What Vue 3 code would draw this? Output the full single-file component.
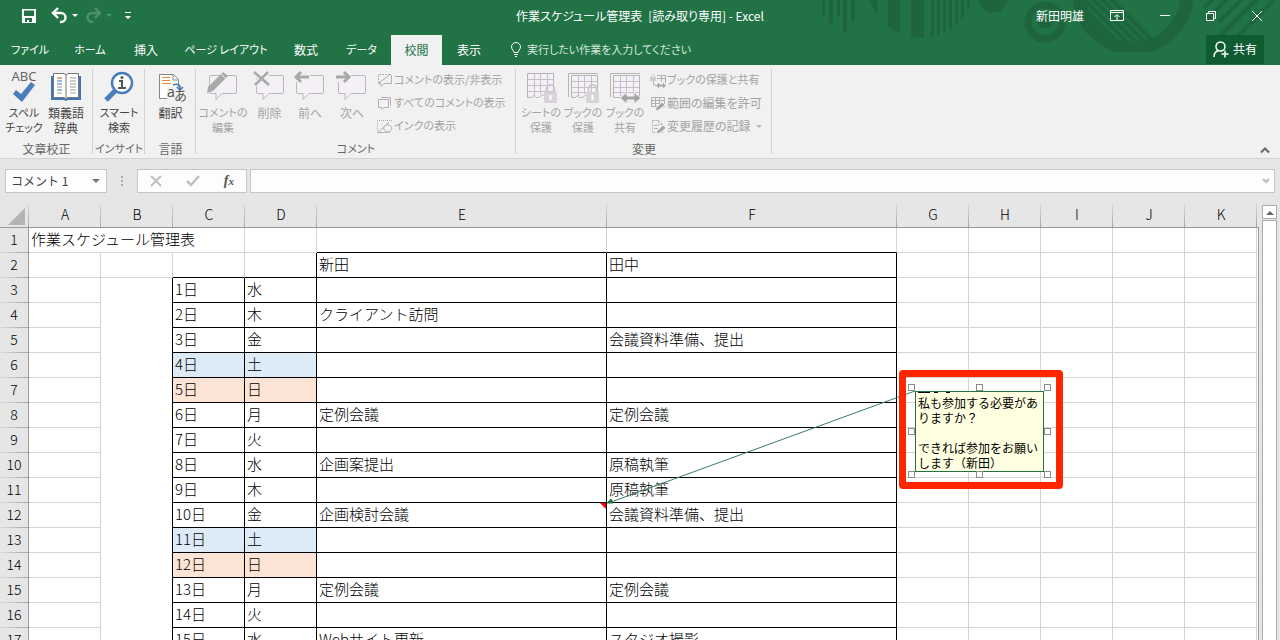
<script setup>
import { ref } from 'vue'

const tabs = ['ファイル', 'ホーム', '挿入', 'ページ レイアウト', '数式', 'データ', '校閲', '表示']
const activeTab = ref('校閲')
const nameBox = ref('コメント 1')
const formula = ref('')

const isKana = (text) => /^[ァ-ヶー ]+$/.test(text)

const columns = ['A', 'B', 'C', 'D', 'E', 'F', 'G', 'H', 'I', 'J', 'K']
const days = '水木金土日月火水木金土日月火水'.split('')
const tasks = {
  4: ['クライアント訪問', ''],
  5: ['', '会議資料準備、提出'],
  8: ['定例会議', '定例会議'],
  10: ['企画案提出', '原稿執筆'],
  11: ['', '原稿執筆'],
  12: ['企画検討会議', '会議資料準備、提出'],
  15: ['定例会議', '定例会議'],
  17: ['Webサイト更新', 'スタジオ撮影']
}

const rows = Array.from({ length: 17 }, (_, i) => {
  const n = i + 1
  const values = {}
  if (n === 1) values.A = '作業スケジュール管理表'
  if (n === 2) {
    values.E = '新田'
    values.F = '田中'
  }
  if (n > 2) {
    values.C = `${n - 2}日`
    values.D = days[n - 3]
    const t = tasks[n] || ['', '']
    values.E = t[0]
    values.F = t[1]
  }
  return { n, values }
})

function cellClass(col, n) {
  const day = days[n - 3]
  const inDates = col === 'C' || col === 'D'
  const inTasks = col === 'E' || col === 'F'
  return {
    'line-right': (inTasks && n > 1) || (inDates && n > 2) || (col === 'B' && n > 2) || (col === 'D' && n === 2),
    'line-bottom': inTasks || (inDates && n > 1),
    'open-right': n === 1 && (col === 'A' || col === 'B'),
    'open-bottom': col === 'B' && n > 2,
    saturday: inDates && day === '土',
    sunday: inDates && day === '日',
    noted: col === 'E' && n === 12
  }
}
</script>

<template>
  <div class="excel">
    <header class="top">
      <svg class="pattern" width="480" height="65" viewBox="0 0 480 65" aria-hidden="true">
        <defs>
          <clipPath id="disc"><circle cx="121" cy="-15" r="53" /></clipPath>
          <clipPath id="hoop"><circle cx="333" cy="-6" r="53" /></clipPath>
          <clipPath id="band"><rect x="260" y="0" width="150" height="52" /></clipPath>
        </defs>
        <g fill="#1e653d">
          <path d="M22 0h3v16h-3zM29 0h4v24h-4zM37 0h3v16h-3zM43 0h4v32h-4zM51 0h4v21h-4z" />
          <path clip-path="url(#disc)" d="M68 0h9v40h-9zM88 0h12v40H88zM111 0h13v40h-13zM131 0h3v40h-3zM137 0h3v40h-3zM143 0h3v40h-3zM149 0h3v40h-3zM155 0h3v40h-3zM161 0h3v40h-3zM167 0h3v40h-3z" />
          <circle cx="193" cy="-1" r="14" />
          <circle cx="245" cy="22" r="7" />
        </g>
        <circle cx="245" cy="22" r="17" fill="none" stroke="#1e653d" stroke-width="7" />
        <g clip-path="url(#band)" stroke="#1e653d" fill="none">
          <circle cx="333" cy="-6" r="54" stroke-width="13" />
          <g clip-path="url(#hoop)" stroke-width="4">
            <path d="M268 -8l64 64M277 -8l64 64M286 -8l64 64M295 -8l64 64M304 -8l64 64" />
            <path d="M262 0l60 60" stroke-width="9" />
          </g>
        </g>
        <path d="M404 8l10-10M405 21l24-24M419 22l24-24M420 36l38-38M430 44l44-44" stroke="#1e653d" stroke-width="4" />
      </svg>

      <div class="titlebar">
        <div class="quick">
          <button aria-label="上書き保存">
            <svg width="14" height="14" viewBox="0 0 14 14"><path fill="#fff" fill-rule="evenodd" d="M0 0h14v14H0zM2 1.500v5.500h10v-5.500zM3 9v4h2v-2h2v2h3V9z" /></svg>
          </button>
          <button class="undo" aria-label="元に戻す">
            <svg width="26" height="16" viewBox="0 0 26 16"><path d="M1 5h8a4 4 0 0 1 0 9H8M6 0L1 5l5 5" fill="none" stroke="#fff" stroke-width="2.400" /><path d="M20 6h6l-3 3z" fill="#fff" /></svg>
          </button>
          <button class="redo" aria-label="やり直し">
            <svg width="26" height="16" viewBox="0 0 26 16"><path d="M14 5H6a4 4 0 0 0 0 9h1M9 0l5 5-5 5" fill="none" stroke="#4f9070" stroke-width="2.400" /><path d="M20 6h6l-3 3z" fill="#4f9070" /></svg>
          </button>
          <button aria-label="クイック アクセス ツール バーのユーザー設定">
            <svg width="6" height="8" viewBox="0 0 6 8"><path d="M0 0h6v1H0zM0 4h6L3 7z" fill="#fff" /></svg>
          </button>
        </div>
        <h1>作業スケジュール管理表&ensp;[読み取り専用] - Excel</h1>
        <div class="account">
          <span class="user">新田明雄</span>
          <button aria-label="リボンの表示オプション">
            <svg width="14" height="12" viewBox="0 0 14 12" fill="none" stroke="#fff"><path d="M.5 .5h13v10H.5zM.5 2.500h13M7 10V5M4.500 7L7 4.500 9.500 7" /></svg>
          </button>
          <button aria-label="最小化">
            <svg width="10" height="12" viewBox="0 0 10 12"><path d="M0 5.500h10" stroke="#fff" /></svg>
          </button>
          <button aria-label="元に戻す（縮小）">
            <svg width="10" height="10" viewBox="0 0 10 10" fill="none" stroke="#fff"><path d="M.5 2.500h7v7h-7zM2.500 2.500v-2h7v7h-2" /></svg>
          </button>
          <button aria-label="閉じる">
            <svg width="10" height="10" viewBox="0 0 10 10"><path d="M0 0l10 10M10 0L0 10" stroke="#fff" /></svg>
          </button>
        </div>
      </div>

      <nav class="tabs">
        <button v-for="t in tabs" :key="t" class="tab" :class="{ active: t === activeTab, compact: isKana(t) }" @click="activeTab = t">{{ t }}</button>
        <button class="tell compact">
          <svg width="12" height="15" viewBox="0 0 12 15" fill="none" stroke="#fff"><path d="M4 10.500C4 8.500 1.500 7.500 1.500 5a4.500 4.500 0 0 1 9 0c0 2.500-2.500 3.500-2.500 5.500zM4 12.500h4M5 14.500h2" /></svg>
          実行したい作業を入力してください
        </button>
        <button class="share">
          <svg width="16" height="17" viewBox="0 0 16 17" fill="none" stroke="#fff" stroke-width="1.500"><circle cx="7.500" cy="5.500" r="4.500" /><path d="M1 16c0-4 2-6 5-6.500M12 9.500v7M8.500 13h7" /></svg>
          <span>共有</span>
        </button>
      </nav>
    </header>

    <section class="ribbon">
      <div class="group proof">
        <div class="tools">
          <button class="big compact">
            <svg width="32" height="32" viewBox="0 0 32 32"><text x="16" y="10" text-anchor="middle" class="abc">ABC</text><path d="M5 23l3-4 5 4 10-12 4 3-13 17z" fill="#4a7ebb" /></svg>
            <span>スペル<br>チェック</span>
          </button>
          <button class="big">
            <svg width="32" height="32" viewBox="0 0 32 32">
              <path d="M1 5h30v24H18l-2 1-2-1H1z" fill="#3f76b5" />
              <path d="M3.500 2.500H14l2 1.500 2-1.500h10.500v24H18l-2 1.500-2-1.500H3.500zM16 4v23" fill="#fff" stroke="#777" />
              <path d="M7 7h5" stroke="#d9512c" /><path d="M7 10h5M7 13h5M7 19h5" stroke="#3f76b5" /><path d="M7 16h5M7 22h5M20 7h6M20 10h6M20 13h6M20 16h6M20 19h6M20 22h6" stroke="#999" />
            </svg>
            <span>類義語<br>辞典</span>
          </button>
        </div>
        <h2>文章校正</h2>
      </div>

      <div class="group insight">
        <div class="tools">
          <button class="big compact">
            <svg width="32" height="32" viewBox="0 0 32 32"><path d="M13 19L3 29" stroke="#4a7ebb" stroke-width="5" /><circle cx="19" cy="12" r="10" fill="#fff" stroke="#4a7ebb" stroke-width="2.500" /><path d="M16 10h3v7M15 17h8" fill="none" stroke="#555" stroke-width="2" /><circle cx="19" cy="6.500" r="1.500" fill="#555" /></svg>
            <span>スマート<br>検索</span>
          </button>
        </div>
        <h2 class="compact">インサイト</h2>
      </div>

      <div class="group language">
        <div class="tools">
          <button class="big">
            <svg width="32" height="32" viewBox="0 0 32 32"><path d="M4.500 3.500h14l5 5v19h-19z" fill="#fff" stroke="#888" /><path d="M18 3v6h6" fill="none" stroke="#888" /><path d="M7 6.500h8M7 9.500h8M7 12.500h9" stroke="#e8883a" /><path d="M12 16h14v12H12z" fill="#f1f1f1" /><path d="M18 14c5-2 8 0 7 5M22 16l3 3 3-3" fill="none" stroke="#3f76b5" stroke-width="1.500" /><text x="12" y="26" class="latin">a</text><text x="19" y="29" class="kana">あ</text></svg>
            <span>翻訳</span>
          </button>
        </div>
        <h2>言語</h2>
      </div>

      <div class="group comments">
        <div class="tools">
          <button class="big wide compact" disabled>
            <svg width="32" height="32" viewBox="0 0 32 32"><path d="M4 4.500h24q1.500 0 1.500 1.500v15q0 1.500-1.500 1.500H15l-6 6v-6H4q-1.500 0-1.500-1.500V6q0-1.500 1.500-1.500z" fill="#f5f0f7" stroke="#b9b9b9" /><path d="M0 22l1-6L16 1l5 4L6 20z" fill="#a9a9a9" /><path d="M14 3l5 5" stroke="#f1f1f1" /></svg>
            <span>コメントの<br>編集</span>
          </button>
          <button class="big narrow" disabled>
            <svg width="32" height="32" viewBox="0 0 32 32"><path d="M4 4.500h24q1.500 0 1.500 1.500v15q0 1.500-1.500 1.500H15l-6 6v-6H4q-1.500 0-1.500-1.500V6q0-1.500 1.500-1.500z" fill="#f5f0f7" stroke="#b9b9b9" /><path d="M0 1l15 13M14 1L1 14" stroke="#f1f1f1" stroke-width="6" /><path d="M0 1l15 13M14 1L1 14" stroke="#a9a9a9" stroke-width="2.500" /></svg>
            <span>削除</span>
          </button>
          <button class="big" disabled>
            <svg width="32" height="32" viewBox="0 0 32 32"><path d="M4 4.500h24q1.500 0 1.500 1.500v15q0 1.500-1.500 1.500H15l-6 6v-6H4q-1.500 0-1.500-1.500V6q0-1.500 1.500-1.500z" fill="#f5f0f7" stroke="#b9b9b9" /><path d="M0 0h16v11H0z" fill="#f1f1f1" /><path d="M2 6h13M7 1L2 6l5 5" fill="none" stroke="#a9a9a9" stroke-width="3" /></svg>
            <span>前へ</span>
          </button>
          <button class="big" disabled>
            <svg width="32" height="32" viewBox="0 0 32 32"><path d="M4 4.500h24q1.500 0 1.500 1.500v15q0 1.500-1.500 1.500H15l-6 6v-6H4q-1.500 0-1.500-1.500V6q0-1.500 1.500-1.500z" fill="#f5f0f7" stroke="#b9b9b9" /><path d="M0 0h15v11H0z" fill="#f1f1f1" /><path d="M0 6h13M8 1l5 5-5 5" fill="none" stroke="#a9a9a9" stroke-width="3" /></svg>
            <span>次へ</span>
          </button>
          <div class="list compact">
            <button disabled><svg width="16" height="16" viewBox="0 0 16 16" fill="none" stroke="#b0b0b0"><path d="M1.500 10V1.500H14" stroke-dasharray="2 1" /><path d="M1 10.500L14 1M14.500 2v8.500H7l-3 3v-3H1.500" /></svg><span>コメントの表示/非表示</span></button>
            <button disabled><svg width="16" height="16" viewBox="0 0 16 16" fill="#f5f0f7" stroke="#b0b0b0"><path d="M4 1.500h9.500v8" /><path d="M1.500 3.500h10v8H7l-2 2v-2H1.500z" /></svg><span>すべてのコメントの表示</span></button>
            <button disabled><svg width="16" height="16" viewBox="0 0 16 16" fill="none" stroke="#b0b0b0"><path d="M.5 14V1.500H15" stroke-dasharray="1 1" /><path d="M1 13.500L12 3M1 13.500h6c7 0 9-3 7-6s-6-2-7 1 2 4 6 5" /></svg><span>インクの表示</span></button>
          </div>
        </div>
        <h2 class="compact">コメント</h2>
      </div>

      <div class="group changes">
        <div class="tools">
          <button class="big compact" disabled>
            <svg width="32" height="32" viewBox="0 0 32 32"><path d="M2.500 2.500h26v24h-8l-3-3-4 3h-3l-2-2-2 2h-4z" fill="#f5f0f7" stroke="#b5b5b5" /><path d="M3 8.500h25M3 14.500h25M3 20.500h25M9.500 3v22M15.500 3v20M22.500 3v20" stroke="#c5c0c7" /><path d="M21.500 22v-4a4 4 0 0 1 8 0v4" fill="none" stroke="#cfcacf" stroke-width="2" /><path d="M19 21h13v11H19z" fill="#d8d3d8" /><path d="M25.500 24v5" stroke="#fff" stroke-width="2" /></svg>
            <span>シートの<br>保護</span>
          </button>
          <button class="big compact" disabled>
            <svg width="32" height="32" viewBox="0 0 32 32"><path d="M1.500 26V2.500H31" fill="none" stroke="#b5b5b5" /><path d="M4.500 4.500h26v22h-8l-3-3-4 3h-3l-2-2-2 2h-4z" fill="#f5f0f7" stroke="#b5b5b5" /><path d="M5 10.500h25M5 16.500h25M5 21.500h25M11.500 5v20M17.500 5v18M24.500 5v18" stroke="#c5c0c7" /><path d="M21.500 22v-4a4 4 0 0 1 8 0v4" fill="none" stroke="#cfcacf" stroke-width="2" /><path d="M19 21h13v11H19z" fill="#d8d3d8" /><path d="M25.500 24v5" stroke="#fff" stroke-width="2" /></svg>
            <span>ブックの<br>保護</span>
          </button>
          <button class="big compact" disabled>
            <svg width="32" height="32" viewBox="0 0 32 32"><path d="M1.500 26V2.500H31" fill="none" stroke="#b5b5b5" /><path d="M4.500 4.500h26v22h-26z" fill="#f5f0f7" stroke="#b5b5b5" /><path d="M5 10.500h25M5 16.500h25M5 21.500h25M11.500 5v20M17.500 5v20M24.500 5v20" stroke="#c5c0c7" /><path d="M11 27l7-6v4h7v-4l7 6-7 6v-4h-7v4z" fill="#a5a5a5" stroke="#f1f1f1" /></svg>
            <span>ブックの<br>共有</span>
          </button>
          <div class="list">
            <button disabled><svg width="16" height="16" viewBox="0 0 16 16" fill="none" stroke="#b0b0b0"><path d="M7 2.500h8.500V10M7 5.500h8M3.500 8v4H6M11.500 3v6" /><path d="M0 4h6v4H0z" fill="#cfcacf" stroke="none" /><path d="M1.500 4V2.500q1.500-3 3 0V4" stroke="#cfcacf" /><path d="M6 12.500l3-3v2h4v-2l3 3-3 3v-2H9v2z" fill="#a5a5a5" stroke="none" /></svg><span class="compact">ブックの保護と共有</span></button>
            <button disabled><svg width="16" height="16" viewBox="0 0 16 16" fill="none" stroke="#b0b0b0"><path d="M1.500 1.500h13v9h-13zM2 4.500h12M2 7.500h12M5.500 2v8M9.500 2v8" /><path d="M5 15l1-3 6-6 3 3-6 5z" fill="#a5a5a5" stroke="#f1f1f1" /></svg><span>範囲の編集を許可</span></button>
            <button disabled><svg width="16" height="16" viewBox="0 0 16 16" fill="none" stroke="#b0b0b0"><path d="M2.500 1.500h6l4 4v8h-10zM8.500 1.500v4h4" stroke-dasharray="2 1" /><path d="M4 6.500h4M4 9.500h4" /><path d="M6 15l1-3 6-6 3 3-6 5z" fill="#a5a5a5" stroke="#f1f1f1" /></svg><span>変更履歴の記録</span><i class="caret"></i></button>
          </div>
        </div>
        <h2>変更</h2>
      </div>
      <button class="collapse" aria-label="リボンを折りたたむ">
        <svg width="10" height="7" viewBox="0 0 10 7"><path d="M1 5.500l4-4 4 4" fill="none" stroke="#666" stroke-width="2" /></svg>
      </button>
    </section>

    <section class="formula-bar">
      <div class="name-box">
        <input v-model="nameBox" aria-label="名前ボックス">
        <button aria-label="名前の一覧"><svg width="8" height="5" viewBox="0 0 8 5"><path d="M0 0h8L4 4z" fill="#777" /></svg></button>
      </div>
      <svg class="grip" width="4" height="12" viewBox="0 0 4 12"><path d="M1 1h2v2H1zM1 5h2v2H1zM1 9h2v2H1z" fill="#aaa" /></svg>
      <div class="entry">
        <button aria-label="キャンセル"><svg width="12" height="12" viewBox="0 0 12 12"><path d="M1 1l10 10M11 1L1 11" stroke="#c0c0c0" stroke-width="2" /></svg></button>
        <button aria-label="入力"><svg width="14" height="12" viewBox="0 0 14 12"><path d="M1 6l4 4 8-9" fill="none" stroke="#c0c0c0" stroke-width="2.500" /></svg></button>
        <button class="fx" aria-label="関数の挿入">f<small>x</small></button>
      </div>
      <div class="formula">
        <input v-model="formula" aria-label="数式バー">
        <svg width="8" height="6" viewBox="0 0 8 6"><path d="M1 1l3 3 3-3" fill="none" stroke="#bbb" stroke-width="2" /></svg>
      </div>
    </section>

    <main class="workspace">
      <div class="sheet">
        <table>
          <colgroup>
            <col class="w-head">
            <col v-for="c in columns" :key="c" :class="c === 'E' || c === 'F' ? 'w-task' : 'w-cell'">
            <col>
          </colgroup>
          <thead>
            <tr>
              <th class="corner"><svg width="17" height="17" viewBox="0 0 17 17"><path d="M17 0v17H0z" fill="#b4b4b4" /></svg></th>
              <th v-for="c in columns" :key="c" scope="col">{{ c }}</th>
              <th></th>
            </tr>
          </thead>
          <tbody>
            <tr v-for="r in rows" :key="r.n">
              <th scope="row">{{ r.n }}</th>
              <td v-for="c in columns" :key="c" :class="cellClass(c, r.n)">{{ r.values[c] }}</td>
              <td></td>
            </tr>
          </tbody>
        </table>

        <svg class="leader" width="310" height="118" viewBox="0 0 310 118" aria-hidden="true">
          <path d="M309 1L5 112" stroke="#3a7d5a" fill="none" />
          <path d="M1 113l4-4 2 4z" fill="#217346" stroke="#217346" />
        </svg>
        <aside class="highlight">
          <div class="note">
            <svg class="cut" width="34" height="2" viewBox="0 0 34 2" aria-hidden="true"><path d="M0 0h12v1H0zM16 0h4v1h-4zM28 0h4v1h-4z" fill="#000" /></svg>
            <p>私も参加する必要がありますか？</p>
            <p>できれば参加をお願いします（新田）</p>
          </div>
          <i v-for="h in 8" :key="h" class="handle" :class="'h' + h"></i>
        </aside>
      </div>
      <div class="scroll">
        <button aria-label="上へスクロール"><svg width="8" height="5" viewBox="0 0 8 5"><path d="M0 5l4-4 4 4z" fill="#666" /></svg></button>
        <div class="thumb"></div>
      </div>
    </main>
  </div>
</template>

<style>
body {
  background: #e6e6e6;
}
</style>

<style scoped>
.excel {
  display: flex;
  flex-direction: column;
  height: 100vh;
  overflow: hidden;
  background: #e6e6e6;
  font-family: "Noto Sans CJK JP", sans-serif;
  font-size: 12px;
  font-weight: 400;
  line-height: 15px;
  color: #444;
}
.excel * {
  box-sizing: border-box;
}
button,
input {
  font: inherit;
  color: inherit;
  background: none;
  border: 0;
  padding: 0;
  margin: 0;
  outline: 0;
}
svg {
  display: block;
  flex: none;
  overflow: visible;
}
h1,
h2,
p {
  margin: 0;
  font-size: 12px;
  font-weight: inherit;
}
.compact {
  font-size: 11px;
}

/* title bar and tabs */
.top {
  position: relative;
  background: #217346;
  color: #fff;
  font-feature-settings: "palt";
}
.pattern {
  position: absolute;
  right: 0;
  top: 0;
  overflow: hidden;
}
.titlebar {
  position: relative;
  display: grid;
  grid-template-columns: 1fr auto 1fr;
  align-items: center;
  height: 32px;
}
.titlebar h1,
.user {
  padding-bottom: 2px;
}
.quick {
  display: flex;
  align-items: center;
  gap: 16px;
  padding-left: 22px;
}
.quick .undo {
  margin-right: -8px;
}
.quick .redo {
  margin-right: -3px;
}
.account {
  display: flex;
  align-items: center;
  justify-content: flex-end;
  gap: 36px;
  padding-right: 18px;
}
.user {
  margin-right: -10px;
}
.tabs {
  position: relative;
  display: grid;
  grid-template-columns: 60px 60px 52px 108px 52px 59px 51px 54px 1fr auto;
  height: 33px;
  padding-top: 3px;
}
.tab {
  padding-bottom: 2px;
}
.tab.active {
  background: #f1f1f1;
  color: #217346;
}
.tell {
  display: flex;
  align-items: center;
  gap: 5px;
  padding: 0 0 2px 14px;
  color: #d5e6dc;
  white-space: nowrap;
}
.share {
  display: flex;
  align-items: center;
  justify-content: center;
  gap: 4px;
  width: 58px;
  height: 29px;
  margin-right: 16px;
  background: #0e5c2f;
}
.share span {
  padding-bottom: 2px;
}

/* ribbon */
.ribbon {
  position: relative;
  display: flex;
  height: 94px;
  background: #f1f1f1;
  border-bottom: 1px solid #d2d2d2;
  font-feature-settings: "palt";
}
.group {
  position: relative;
  display: flex;
  flex-direction: column;
  justify-content: space-between;
  padding-bottom: 2px;
}
.group::after {
  content: "";
  position: absolute;
  right: 0;
  top: 4px;
  bottom: 4px;
  width: 1px;
  background: #d2d2d2;
}
.proof {
  width: 93px;
}
.proof .tools {
  padding-left: 3px;
}
.insight {
  width: 52px;
}
.language {
  width: 51px;
}
.comments {
  width: 320px;
}
.changes {
  width: 256px;
}
.changes .tools {
  padding-left: 4px;
}
.group h2 {
  text-align: center;
  color: #666;
  white-space: nowrap;
}
.group h2.compact {
  font-size: 11px;
}
.tools {
  display: flex;
}
.insight .tools,
.language .tools {
  justify-content: center;
}
.big {
  display: flex;
  flex-direction: column;
  align-items: center;
  gap: 2px;
  width: 42px;
  padding-top: 6px;
  white-space: nowrap;
}
.wide {
  width: 54px;
}
.narrow {
  width: 39px;
}
.ribbon button:disabled {
  color: #a3a3a3;
}
.list {
  display: flex;
  flex-direction: column;
  padding: 4px 0 0 4px;
}
.list button {
  display: flex;
  align-items: center;
  gap: 1px;
  height: 23px;
  white-space: nowrap;
}
.list span {
  padding-bottom: 2px;
}
.caret {
  margin-left: 4px;
  border: 3px solid transparent;
  border-top-color: #b5b5b5;
  border-bottom: 0;
}
.abc {
  font: 13px "Noto Sans", sans-serif;
  fill: #666;
}
.latin {
  font: 14px "Noto Sans", sans-serif;
  fill: #555;
}
.kana {
  font: 13px "Noto Sans CJK JP", sans-serif;
  fill: #555;
}
.collapse {
  position: absolute;
  right: 10px;
  bottom: 4px;
}

/* formula bar */
.formula-bar {
  display: flex;
  align-items: center;
  height: 44px;
  padding: 0 5px;
}
.name-box,
.entry,
.formula {
  display: flex;
  align-items: center;
  height: 24px;
  background: #fdfdfd;
  border: 1px solid #c6c6c6;
}
.name-box {
  width: 102px;
  padding: 0 6px 0 5px;
}
.name-box input {
  flex: 1;
  min-width: 0;
  padding-bottom: 2px;
}
.grip {
  margin: 0 13px;
}
.entry {
  width: 110px;
  justify-content: space-around;
}
.fx {
  font: italic bold 14px "Liberation Serif", serif;
  color: #555;
}
.fx small {
  font-size: 11px;
}
.formula {
  flex: 1;
  margin-left: 3px;
  padding-right: 4px;
}
.formula input {
  flex: 1;
}

/* grid */
.workspace {
  flex: 1;
  min-height: 0;
  display: flex;
}
.sheet {
  position: relative;
  flex: 1;
  overflow: hidden;
}
table {
  width: 100%;
  table-layout: fixed;
  border-collapse: separate;
  border-spacing: 0;
  font-size: 15px;
  line-height: 22px;
  color: #000;
}
.w-head {
  width: 29px;
}
.w-cell {
  width: 72px;
}
.w-task {
  width: 290px;
}
th,
td {
  height: 25px;
  padding: 0 0 2px;
  font-weight: 300;
}
thead th {
  background: linear-gradient(#dcdcdc, #a5a5a5) right / 1px 100% no-repeat #e6e6e6;
  border-bottom: 1px solid #999;
  font-size: 14px;
}
thead th:last-child {
  background: #e6e6e6;
}
.corner svg {
  margin: 4px 0 0 8px;
}
tbody th {
  padding-bottom: 3px;
  background: linear-gradient(90deg, #dcdcdc, #a5a5a5) bottom / 100% 1px no-repeat #e6e6e6;
  border-right: 1px solid #999;
  font-size: 14px;
}
td {
  position: relative;
  padding-left: 2px;
  background: #fff;
  border: solid #d4d4d4;
  border-width: 0 1px 1px 0;
  white-space: nowrap;
}
td:first-of-type {
  z-index: 1;
}
td:last-child {
  border-right-color: #999;
}
.line-right {
  border-right-color: #000;
}
.line-bottom {
  border-bottom-color: #000;
}
.open-right {
  border-right-color: #fff;
}
.open-bottom {
  border-bottom-width: 0;
}
.saturday {
  background: #ddebf7;
}
.sunday {
  background: #fce4d6;
}
.noted::after {
  content: "";
  position: absolute;
  right: 0;
  top: 0;
  border: 3px solid;
  border-color: #f00 #f00 transparent transparent;
}

/* comment laid over the grid */
.leader {
  position: absolute;
  left: 606px;
  top: 187px;
  z-index: 2;
}
.highlight {
  position: absolute;
  left: 899px;
  top: 167px;
  z-index: 3;
  width: 164px;
  height: 119px;
  padding: 14px 12px 0 9px;
  border: 7px solid #ff2600;
  border-radius: 4px;
}
.note {
  position: relative;
  height: 81px;
  padding: 3px 2px 0;
  background: #ffffe1;
  border: 1px solid #217346;
  color: #000;
}
.cut {
  position: absolute;
  left: 2px;
  top: 0;
}
.note p + p {
  margin-top: 15px;
}
.handle {
  position: absolute;
  width: 7px;
  height: 7px;
  background: #fff;
  border: 1px solid #8c8c8c;
}
.h1, .h4, .h6 { left: 2px; }
.h2, .h7 { left: 70px; }
.h3, .h5, .h8 { right: 5px; }
.h1, .h2, .h3 { top: 7px; }
.h4, .h5 { top: 51px; }
.h6, .h7, .h8 { bottom: 4px; }

/* scroll bar */
.scroll {
  display: flex;
  flex-direction: column;
  width: 15px;
  margin: 2px 3px 0;
}
.scroll button {
  display: flex;
  align-items: center;
  justify-content: center;
  height: 14px;
  background: #fff;
  border: 1px solid #ababab;
}
.thumb {
  flex: 1;
  margin-top: 1px;
  background: #fff;
  border: 1px solid #ababab;
  border-bottom: 0;
}
</style>
